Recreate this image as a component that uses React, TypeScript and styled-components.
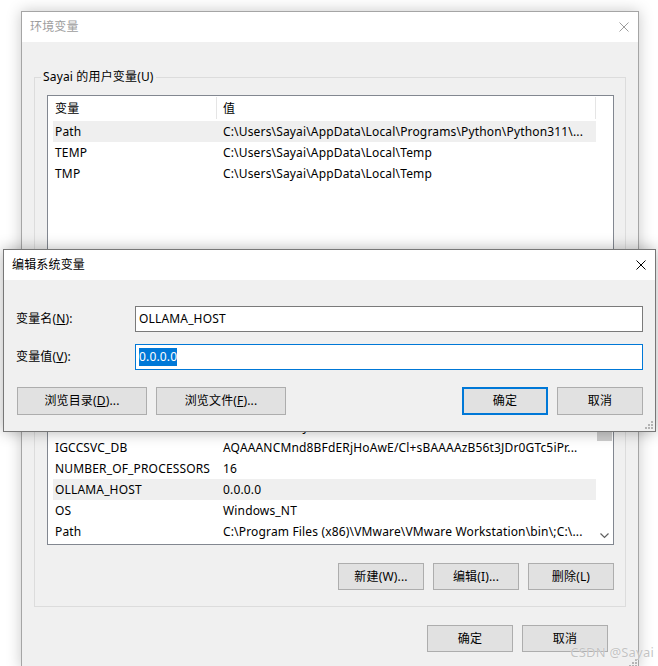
import React from "react";
import styled, { createGlobalStyle } from "styled-components";

const Global = createGlobalStyle`
  html, body { margin: 0; padding: 0; background: #ffffff; }
  body {
    width: 658px; height: 666px; overflow: hidden;
    font-family: "Noto Sans", "Noto Sans CJK SC", sans-serif;
    font-size: 12px; color: #000;
    letter-spacing: 0.16px;
  }
  * { box-sizing: border-box; }
`;

const Desktop = styled.div`
  position: relative;
  width: 658px;
  height: 666px;
  overflow: hidden;
  padding: 11px 0 0 21px;
  background: #ffffff;
`;

const Window = styled.div`
  position: relative;
  width: 618px;
  height: 658px;
  border: 1px solid #a5a5a5;
  background: #f0f0f0;
  box-shadow: 0 0 14px rgba(0, 0, 0, 0.22);
  display: flex;
  flex-direction: column;
`;

const Dialog = styled.div`
  position: absolute;
  left: 3px;
  top: 249px;
  width: 653px;
  height: 183px;
  border: 1px solid #777777;
  background: #f0f0f0;
  box-shadow: 0 0 14px rgba(0, 0, 0, 0.3);
  display: flex;
  flex-direction: column;
`;

const TitleBar = styled.div<{ $active?: boolean }>`
  flex: none;
  height: 30px;
  background: #ffffff;
  display: flex;
  align-items: center;
  justify-content: space-between;
  padding: 0 9px 0 8px;
  color: ${(p) => (p.$active ? "#000000" : "#9d9d9d")};
  line-height: 16px;
`;

const CloseIcon = ({ color }: { color: string }) => (
  <svg width="10" height="10" viewBox="0 0 10 10">
    <path d="M0.5 0.5 L9.5 9.5 M9.5 0.5 L0.5 9.5" stroke={color} strokeWidth="1" fill="none" />
  </svg>
);

const WindowBody = styled.div`
  flex: 1;
  display: flex;
  flex-direction: column;
  padding: 27px 12px 0 12px;
`;

const Group = styled.fieldset`
  margin: 0;
  min-width: 0;
  padding: 10px 11px 16px 12px;
  border: 1px solid #dcdcdc;
`;

const Legend = styled.legend`
  padding: 0 2px;
  margin-left: -6px;
  line-height: 16px;
  color: #000;
`;

const ListBox = styled.div`
  height: 450px;
  border: 1px solid #828790;
  background: #ffffff;
  display: flex;
  overflow: hidden;
`;

const ListRows = styled.div`
  flex: 1;
  min-width: 0;
  padding-left: 5px;
  display: flex;
  flex-direction: column;
`;

const HeaderRow = styled.div`
  flex: none;
  height: 25px;
  display: grid;
  grid-template-columns: 164px 1fr;
`;

const HeaderCell = styled.div<{ $first?: boolean }>`
  display: flex;
  align-items: center;
  padding-left: ${(p) => (p.$first ? "2px" : "6px")};
  border-right: 1px solid #e5e5e5;
  margin: 1px 0 2px;
  white-space: nowrap;
`;

const Row = styled.div<{ $selected?: boolean }>`
  flex: none;
  height: 21px;
  display: grid;
  grid-template-columns: 164px 1fr;
  align-items: center;
  background: ${(p) => (p.$selected ? "#efefef" : "transparent")};
`;

const Cell = styled.div<{ $first?: boolean }>`
  padding-left: ${(p) => (p.$first ? "2px" : "6px")};
  white-space: nowrap;
  overflow: hidden;
  line-height: 16px;
`;

const ListGap = styled.div<{ $h: number }>`
  flex: none;
  height: ${(p) => p.$h}px;
`;

const ScrollTrack = styled.div`
  flex: none;
  width: 17px;
  display: flex;
  flex-direction: column;
  align-items: center;
`;

const Thumb = styled.div`
  margin-top: 234px;
  width: 15px;
  height: 111px;
  background: #cdcdcd;
`;

const ScrollArrow = styled.div`
  margin-top: auto;
  height: 17px;
  width: 17px;
  display: flex;
  align-items: center;
  justify-content: center;
`;

const ButtonRow = styled.div<{ $mt: number; $mr?: number }>`
  display: flex;
  justify-content: flex-end;
  gap: 9px;
  margin-top: ${(p) => p.$mt}px;
  margin-right: ${(p) => p.$mr ?? 0}px;
`;

const Button = styled.button<{ $w: number; $h?: number; $default?: boolean }>`
  width: ${(p) => p.$w}px;
  height: ${(p) => p.$h ?? 27}px;
  padding: 0;
  margin: 0;
  background: #e1e1e1;
  border: ${(p) => (p.$default ? "2px solid #0078d7" : "1px solid #adadad")};
  font-family: inherit;
  font-size: 12px;
  letter-spacing: inherit;
  color: #000;
  line-height: 16px;
  display: flex;
  align-items: center;
  justify-content: center;
  white-space: nowrap;
`;

const DialogBody = styled.div`
  flex: 1;
  display: flex;
  flex-direction: column;
  padding: 26px 12px 0 12px;
`;

const FieldGrid = styled.div`
  display: grid;
  grid-template-columns: 119px 1fr;
  row-gap: 12px;
  align-items: center;
`;

const Label = styled.div`
  line-height: 16px;
  white-space: nowrap;
`;

const TextBox = styled.div<{ $focused?: boolean }>`
  height: 26px;
  background: #ffffff;
  border: 1px solid ${(p) => (p.$focused ? "#0078d7" : "#7a7a7a")};
  padding-left: 3px;
  display: flex;
  align-items: center;
  font-size: 12px;
  line-height: 16px;
  white-space: nowrap;
`;

const Selected = styled.span`
  background: #0078d7;
  color: #ffffff;
  padding: 1px 0;
`;

const Mn = styled.span`
  text-decoration: underline;
`;

const DialogButtons = styled.div`
  display: flex;
  justify-content: space-between;
  margin-top: 17px;
  padding-left: 1px;
`;

const ButtonGroup = styled.div<{ $gap: number }>`
  display: flex;
  gap: ${(p) => p.$gap}px;
`;

const Grip = styled.div<{ $r: number; $b: number }>`
  position: absolute;
  right: ${(p) => p.$r}px;
  bottom: ${(p) => p.$b}px;
  width: 8px;
  height: 8px;
  line-height: 0;
`;

const GripIcon = () => (
  <svg width="8" height="8" viewBox="0 0 8 8">
    <g fill="#b4b4b4">
      <rect x="6" y="0" width="2" height="2" />
      <rect x="3" y="3" width="2" height="2" />
      <rect x="6" y="3" width="2" height="2" />
      <rect x="0" y="6" width="2" height="2" />
      <rect x="3" y="6" width="2" height="2" />
      <rect x="6" y="6" width="2" height="2" />
    </g>
  </svg>
);

const Watermark = styled.div`
  position: absolute;
  right: 4px;
  bottom: 6px;
  font-size: 13px;
  line-height: 16px;
  color: rgba(175, 175, 175, 0.75);
  text-shadow: 0 0 1px #ffffff;
  letter-spacing: 0.2px;
`;

type Item = { name: string; value: string; selected?: boolean };

const userVars: Item[] = [
  { name: "Path", value: "C:\\Users\\Sayai\\AppData\\Local\\Programs\\Python\\Python311\\...", selected: true },
  { name: "TEMP", value: "C:\\Users\\Sayai\\AppData\\Local\\Temp" },
  { name: "TMP", value: "C:\\Users\\Sayai\\AppData\\Local\\Temp" },
];

const sysVars: Item[] = [
  { name: "DriverData", value: "C:\\Windows\\System32\\Drivers\\DriverData" },
  { name: "IGCCSVC_DB", value: "AQAAANCMnd8BFdERjHoAwE/Cl+sBAAAAzB56t3JDr0GTc5iPr..." },
  { name: "NUMBER_OF_PROCESSORS", value: "16" },
  { name: "OLLAMA_HOST", value: "0.0.0.0", selected: true },
  { name: "OS", value: "Windows_NT" },
  { name: "Path", value: "C:\\Program Files (x86)\\VMware\\VMware Workstation\\bin\\;C:\\..." },
];

const VarRow = ({ item }: { item: Item }) => (
  <Row $selected={item.selected}>
    <Cell $first>{item.name}</Cell>
    <Cell>{item.value}</Cell>
  </Row>
);

export default function App() {
  return (
    <>
      <Global />
      <Desktop>
        <Window>
          <TitleBar>
            <span>环境变量</span>
            <CloseIcon color="#9d9d9d" />
          </TitleBar>
          <WindowBody>
            <Group>
              <Legend>Sayai 的用户变量(U)</Legend>
              <ListBox>
                <ListRows>
                  <HeaderRow>
                    <HeaderCell $first>变量</HeaderCell>
                    <HeaderCell>值</HeaderCell>
                  </HeaderRow>
                  {userVars.map((v, i) => (
                    <VarRow key={"u" + i} item={v} />
                  ))}
                  <ListGap $h={232} />
                  {sysVars.map((v, i) => (
                    <VarRow key={"s" + i} item={v} />
                  ))}
                </ListRows>
                <ScrollTrack>
                  <Thumb />
                  <ScrollArrow>
                    <svg width="9" height="6" viewBox="0 0 9 6">
                      <path d="M0.5 0.5 L4.5 4.5 L8.5 0.5" stroke="#606060" strokeWidth="1.2" fill="none" />
                    </svg>
                  </ScrollArrow>
                </ScrollTrack>
              </ListBox>
              <ButtonRow $mt={18}>
                <Button $w={86}>新建(W)...</Button>
                <Button $w={86}>编辑(I)...</Button>
                <Button $w={86}>删除(L)</Button>
              </ButtonRow>
            </Group>
            <ButtonRow $mt={18} $mr={18}>
              <Button $w={86}>确定</Button>
              <Button $w={86}>取消</Button>
            </ButtonRow>
          </WindowBody>
          <Grip $r={1} $b={1}>
            <GripIcon />
          </Grip>
        </Window>

        <Dialog>
          <TitleBar $active>
            <span>编辑系统变量</span>
            <CloseIcon color="#000000" />
          </TitleBar>
          <DialogBody>
            <FieldGrid>
              <Label>
                变量名(<Mn>N</Mn>):
              </Label>
              <TextBox>OLLAMA_HOST</TextBox>
              <Label>
                变量值(<Mn>V</Mn>):
              </Label>
              <TextBox $focused>
                <Selected>0.0.0.0</Selected>
              </TextBox>
            </FieldGrid>
            <DialogButtons>
              <ButtonGroup $gap={9}>
                <Button $w={130} $h={28}>
                  浏览目录(<Mn>D</Mn>)...
                </Button>
                <Button $w={130} $h={28}>
                  浏览文件(<Mn>F</Mn>)...
                </Button>
              </ButtonGroup>
              <ButtonGroup $gap={9}>
                <Button $w={86} $h={28} $default>
                  确定
                </Button>
                <Button $w={86} $h={28}>
                  取消
                </Button>
              </ButtonGroup>
            </DialogButtons>
          </DialogBody>
          <Grip $r={2} $b={2}>
            <GripIcon />
          </Grip>
        </Dialog>

        <Watermark>CSDN @Sayai</Watermark>
      </Desktop>
    </>
  );
}
